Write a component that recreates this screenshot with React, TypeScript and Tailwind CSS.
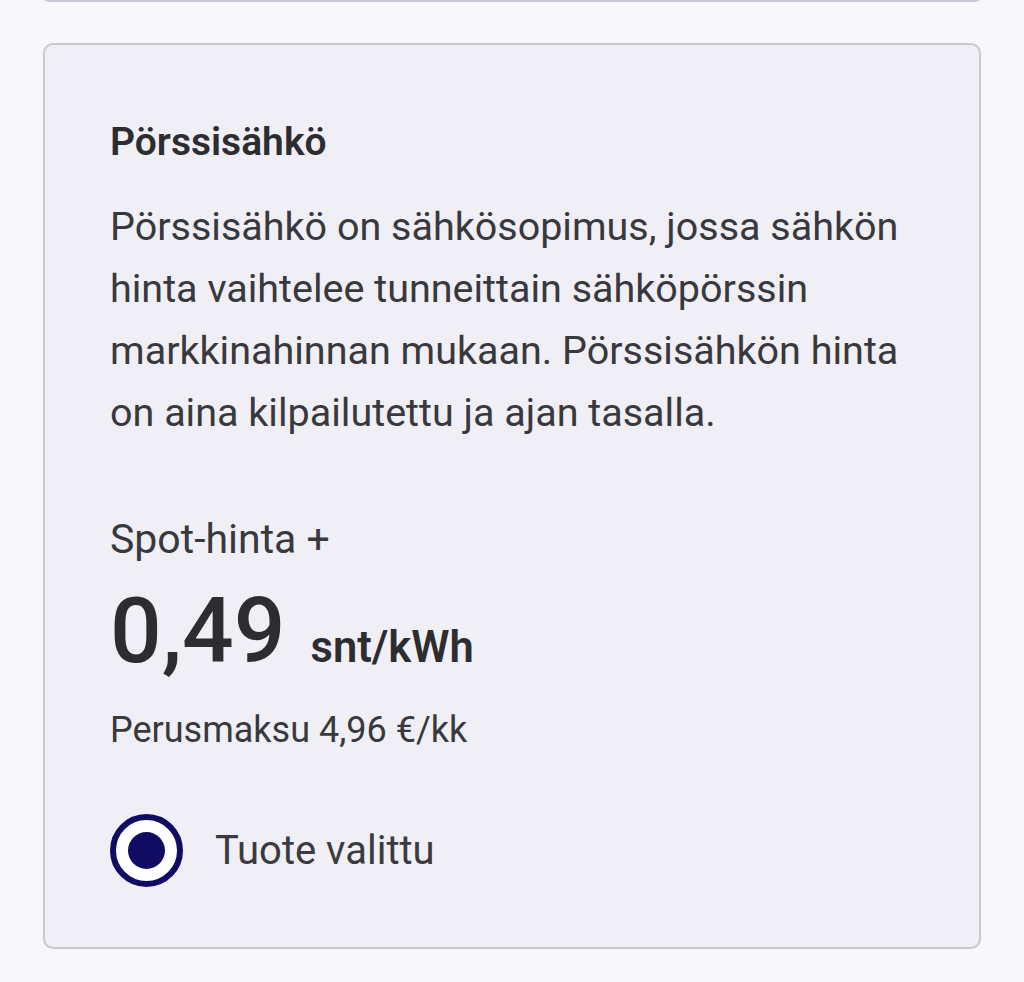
import React from "react";

export default function App() {
  const font = { fontFamily: "Roboto, 'Noto Sans', sans-serif" } as React.CSSProperties;
  return (
    <div className="min-h-[982px] w-[1024px] bg-[#f8f8fb] overflow-hidden" style={font}>
      <div className="mx-[43px] h-[12px] -mt-[10px] rounded-[10px] border-2 border-[#c8c8d2] bg-[#efeff5]" />
      <div className="mx-[43px] mt-[41px] h-[906px] rounded-[10px] border-2 border-[#c8c8d2] bg-[#efeff5] pl-[65px] pr-[60px] pt-[73px] text-[#333338]">
        <h2 className="text-[39px] leading-[48px] font-semibold text-[#2d2d31]">Pörssisähkö</h2>
        <p className="mt-[30px] text-[39.5px] leading-[62px] text-[#38383d]">
          Pörssisähkö on sähkösopimus, jossa sähkön hinta vaihtelee tunneittain sähköpörssin markkinahinnan mukaan. Pörssisähkön hinta on aina kilpailutettu ja ajan tasalla.
        </p>
        <div className="mt-[70px] text-[41px] leading-[50px] text-[#38383d]">Spot-hinta +</div>
        <div className="mt-[22px] flex items-baseline gap-[25px] text-[#2d2d31]">
          <span className="text-[91px] leading-[91px] font-medium">0,49</span>
          <span className="text-[43.5px] font-semibold">snt/kWh</span>
        </div>
        <div className="mt-[28px] text-[36px] leading-[44px] text-[#38383d]">Perusmaksu 4,96 €/kk</div>
        <div className="mt-[62px] flex items-center gap-[32px]">
          <div className="flex h-[73px] w-[73px] items-center justify-center rounded-full border-[6px] border-[#100c63] bg-white">
            <div className="h-[37px] w-[37px] rounded-full bg-[#100c63]" />
          </div>
          <span className="text-[40px] leading-[60px] text-[#3a3a3f]">Tuote valittu</span>
        </div>
      </div>
    </div>
  );
}
